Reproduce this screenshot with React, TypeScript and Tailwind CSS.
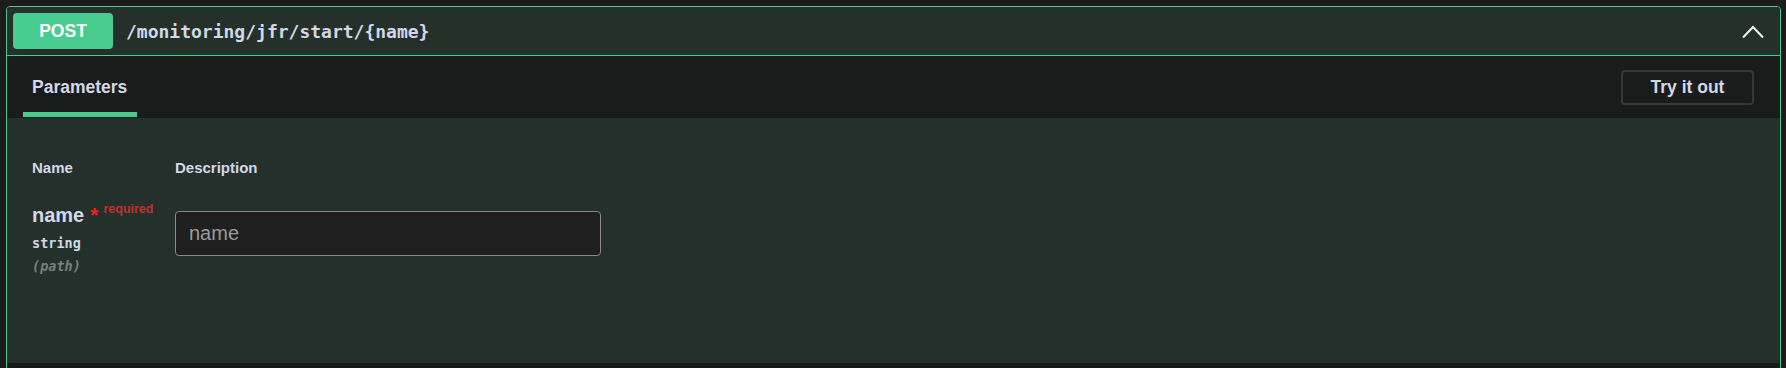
import React from 'react';

const sans = "font-['Liberation_Sans',Arial,sans-serif]";
const mono = "font-['DejaVu_Sans_Mono','Liberation_Mono',monospace]";

const ChevronUp = () => (
  <svg width="22" height="14" viewBox="0 0 22 14" fill="none">
    <path d="M1 12.5 L11 2 L21 12.5" stroke="#f2f2f2" strokeWidth="2" />
  </svg>
);

export default function App() {
  return (
    <div className={`h-[368px] bg-[#1c1c1c] pt-[6px] pl-[6px] overflow-hidden ${sans}`}>
      <div className="w-[1775px] h-[400px] border border-[#49cc90] rounded-[4px] bg-[#181a19] overflow-hidden">
        {/* Summary bar */}
        <div className="flex items-center h-[49px] pl-[6px] pr-[16px] bg-[#243029] border-b border-[#49cc90]">
          <span className="flex items-center justify-center w-[100px] h-[36px] rounded-[4px] bg-[#49cc90] text-white text-[17.5px] font-bold">
            POST
          </span>
          <span className={`ml-[13px] text-[18px] font-bold text-[#d3d8e9] ${mono}`}>/monitoring/jfr/start/{'{name}'}</span>
          <span className="ml-auto pt-[1px]">
            <ChevronUp />
          </span>
        </div>

        {/* Tabs */}
        <div className="flex items-stretch justify-between h-[62px] bg-[#1a1b1b] pl-[16px] pr-[26px]">
          <div className="flex flex-col w-[114px]">
            <div className="flex-1 flex items-center pl-[9px] pt-[6px] text-[17.5px] font-bold text-[#d3d8e9]">Parameters</div>
            <div className="h-[5px] bg-[#49cc90] mb-[1px]" />
          </div>
          <div className="flex items-center pt-[1px]">
            <button className="w-[133px] h-[35px] rounded-[4px] border-2 border-[#363838] bg-transparent text-[17.5px] font-bold text-[#d3d8e9]">
              Try it out
            </button>
          </div>
        </div>

        {/* Body */}
        <div className="h-[245px] bg-[#23302c] pl-[25px] pt-[41px]">
          <div className="flex text-[15px] font-bold text-[#d3d8e9] h-[18px] items-center">
            <div className="w-[143px]">Name</div>
            <div>Description</div>
          </div>
          <div className="flex items-start mt-[26px]">
            <div className="w-[143px]">
              <div className="flex items-start h-[24px]">
                <span className="text-[20px] font-bold text-[#d3d8e9] leading-[24px]">name</span>
                <span className="ml-[6px] mt-[1px] text-[#ff1a1a] text-[21px] font-bold leading-[22px]">*</span>
                <span className="ml-[5px] mt-[-1px] text-[#c2302b] text-[12.5px] font-bold leading-[15px]">required</span>
              </div>
              <div className={`mt-[8px] text-[13.5px] leading-[17px] font-bold text-[#d3d8e9] ${mono}`}>string</div>
              <div className={`mt-[6px] text-[13.5px] leading-[17px] font-bold italic text-[#7a7f7d] ${mono}`}>(path)</div>
            </div>
            <input
              placeholder="name"
              className="mt-[8px] w-[426px] h-[45px] rounded-[4px] border border-[#8a8a8a] bg-[#1f1f1f] px-[13px] text-[20px] text-[#d3d8e9] placeholder:text-[#9a9a9a] outline-none"
            />
          </div>
        </div>
        <div className="h-[40px] bg-[#181a19]" />
      </div>
    </div>
  );
}
